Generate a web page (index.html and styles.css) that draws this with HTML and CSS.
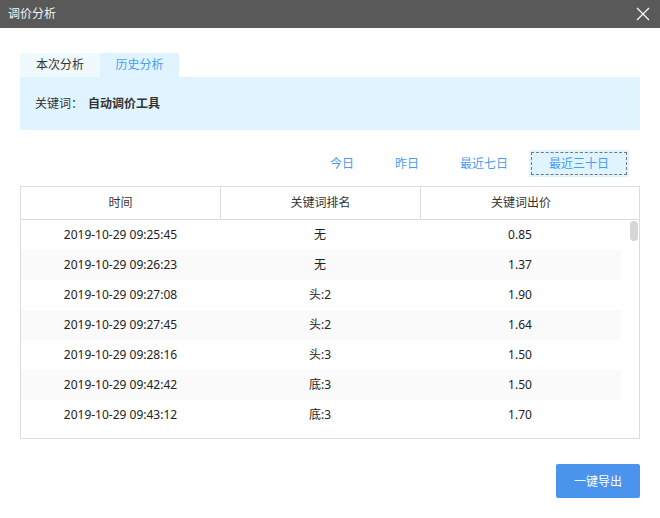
FILE: index.html
```html
<!DOCTYPE html>
<html lang="zh-CN">
<head>
<meta charset="utf-8">
<title>调价分析</title>
<link rel="stylesheet" href="styles.css">
</head>
<body>
<div class="dialog">
  <div class="titlebar">
    <span class="title">调价分析</span>
    <svg class="close" width="14" height="14" viewBox="0 0 14 14"><path d="M1 1L13 13M13 1L1 13" stroke="#fff" stroke-width="1.2" fill="none"/></svg>
  </div>
  <div class="content">
    <div class="tabs">
      <div class="tab">本次分析</div>
      <div class="tab active">历史分析</div>
    </div>
    <div class="panel">
      <span class="label">关键词：</span><span class="keyword">自动调价工具</span>
    </div>
    <div class="filters">
      <div class="filter">今日</div>
      <div class="filter">昨日</div>
      <div class="filter">最近七日</div>
      <div class="filter selected"><span class="focus">最近三十日</span></div>
    </div>
    <div class="table">
      <div class="thead">
        <div class="th">时间</div>
        <div class="th">关键词排名</div>
        <div class="th last">关键词出价</div>
      </div>
      <div class="tbody">
        <div class="rows">
          <div class="tr"><div class="td">2019-10-29 09:25:45</div><div class="td">无</div><div class="td">0.85</div></div>
          <div class="tr alt"><div class="td">2019-10-29 09:26:23</div><div class="td">无</div><div class="td">1.37</div></div>
          <div class="tr"><div class="td">2019-10-29 09:27:08</div><div class="td">头:2</div><div class="td">1.90</div></div>
          <div class="tr alt"><div class="td">2019-10-29 09:27:45</div><div class="td">头:2</div><div class="td">1.64</div></div>
          <div class="tr"><div class="td">2019-10-29 09:28:16</div><div class="td">头:3</div><div class="td">1.50</div></div>
          <div class="tr alt"><div class="td">2019-10-29 09:42:42</div><div class="td">底:3</div><div class="td">1.50</div></div>
          <div class="tr"><div class="td">2019-10-29 09:43:12</div><div class="td">底:3</div><div class="td">1.70</div></div>
        </div>
        <div class="scrollbar"><div class="thumb"></div></div>
      </div>
    </div>
    <div class="actions">
      <button class="export">一键导出</button>
    </div>
  </div>
</div>
</body>
</html>
```
FILE: styles.css
```css
* { box-sizing: border-box; }
html, body { margin: 0; padding: 0; background: #fff; }
body {
  width: 660px;
  height: 518px;
  overflow: hidden;
  font-family: "Noto Sans", "Noto Sans CJK SC", sans-serif;
  font-size: 12px;
  line-height: 16px;
  color: #333;
}
.titlebar {
  height: 28px;
  background: #595959;
  display: flex;
  align-items: center;
  justify-content: space-between;
  padding: 0 10px 0 8px;
}
.title { color: #f2f2f2; font-size: 12px; }
.close { display: block; }
.content { padding: 25px 20px 0; }
.tabs { display: flex; height: 24px; }
.tab {
  width: 80px;
  display: flex;
  align-items: center;
  justify-content: center;
  background: #f0f9fe;
  color: #333;
}
.tab.active { width: 79px; background: #dff4fe; color: #4a9cf2; }
.panel {
  height: 53px;
  background: #dff4fe;
  display: flex;
  align-items: center;
  padding-left: 15px;
}
.label { color: #333; margin-right: 5px; }
.keyword { font-weight: 700; color: #333; }
.filters {
  display: flex;
  justify-content: flex-end;
  gap: 1px;
  margin-top: 20px;
  padding-right: 11px;
}
.filter {
  height: 27px;
  padding: 0 20px;
  display: flex;
  align-items: center;
  justify-content: center;
  color: #4a9cf2;
}
.filter.selected {
  background: #dff4fe;
  padding: 2px;
}
.focus {
  height: 100%;
  padding: 0 17px;
  border: 1px dashed #777;
  display: flex;
  align-items: center;
}
.table {
  margin-top: 9px;
  border: 1px solid #dcdcdc;
}
.thead {
  display: flex;
  height: 33px;
  border-bottom: 1px solid #dcdcdc;
}
.th {
  width: 200px;
  display: flex;
  align-items: center;
  justify-content: center;
  border-right: 1px solid #dcdcdc;
}
.th.last { flex: 1; border-right: none; padding-right: 18px; }
.tbody {
  display: flex;
  height: 218px;
  overflow: hidden;
}
.rows { width: 600px; }
.tr { display: flex; height: 30px; }
.tr.alt { background: #fafafa; }
.td {
  width: 200px;
  display: flex;
  align-items: center;
  justify-content: center;
  color: #222;
  padding-bottom: 1px;
}
.tr .td:first-child { width: 199px; }
.scrollbar { flex: 1; position: relative; }
.thumb {
  position: absolute;
  right: 1px;
  top: 1px;
  width: 8px;
  height: 20px;
  border-radius: 4px;
  background: #d6d6d6;
}
.actions {
  display: flex;
  justify-content: flex-end;
  margin-top: 25px;
}
.export {
  width: 84px;
  height: 34px;
  border: none;
  border-radius: 2px;
  background: #4a94ee;
  color: #fff;
  font-family: inherit;
  font-size: 12px;
  padding: 0;
}
```
